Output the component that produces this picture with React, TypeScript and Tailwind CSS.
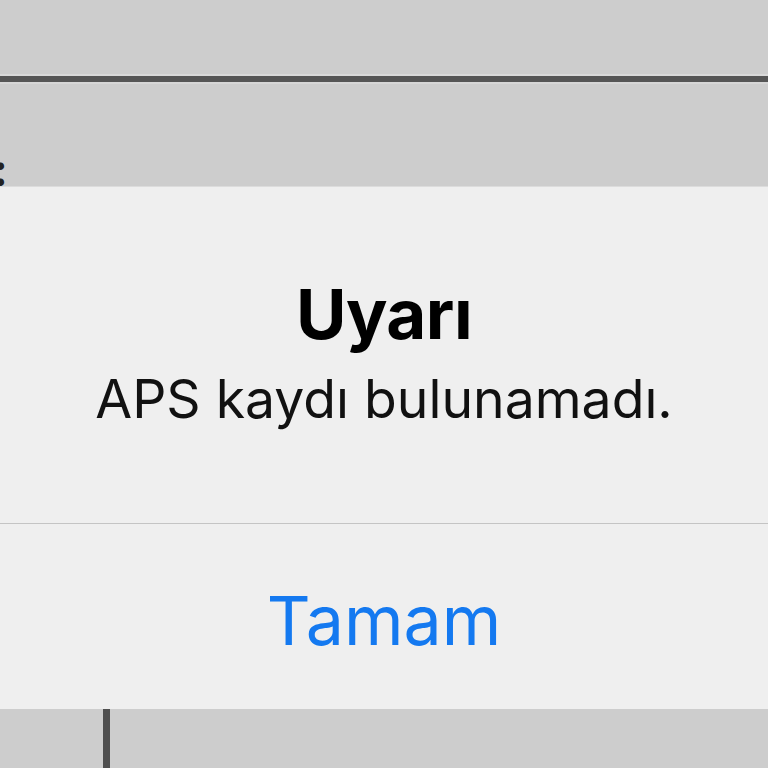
const App = () => {
  return (
    <div
      className="w-[768px] h-[768px] overflow-hidden bg-[#cdcdcd] flex flex-col"
      style={{ fontFamily: 'Inter, "Noto Sans", sans-serif' }}
    >
      <div className="h-[74px] shrink-0" />
      <div className="h-[2px] shrink-0 bg-[#d9d9d9]" />
      <div className="h-[6px] shrink-0 bg-[#555555]" />
      <div className="h-[2px] shrink-0 bg-[#d6d6d6]" />
      <div className="h-[102px] shrink-0 flex items-end">
        <span className="ml-[-7px] mb-[-6px] text-[44px] leading-none font-bold text-[#222]">:</span>
      </div>

      <div className="shrink-0 bg-[#efefef] border-t border-[#dcdcdc] flex flex-col">
        <div className="h-[336px] flex flex-col items-center pt-[87px]">
          <h1 className="text-[69px] leading-[80px] font-bold text-black tracking-[-0.5px]">Uyarı</h1>
          <p className="text-[53.5px] leading-[70px] text-[#111] mt-[10px]">APS kaydı bulunamadı.</p>
        </div>
        <div className="h-px bg-[#c4c4c4]" />
        <button className="h-[185px] flex items-center justify-center text-[68px] text-[#1479f0] pt-[6px]">
          Tamam
        </button>
      </div>

      <div className="flex-1 flex">
        <div className="ml-[103px] w-[7px] bg-[#4f4f4f]" />
      </div>
    </div>
  );
};

export default App;
